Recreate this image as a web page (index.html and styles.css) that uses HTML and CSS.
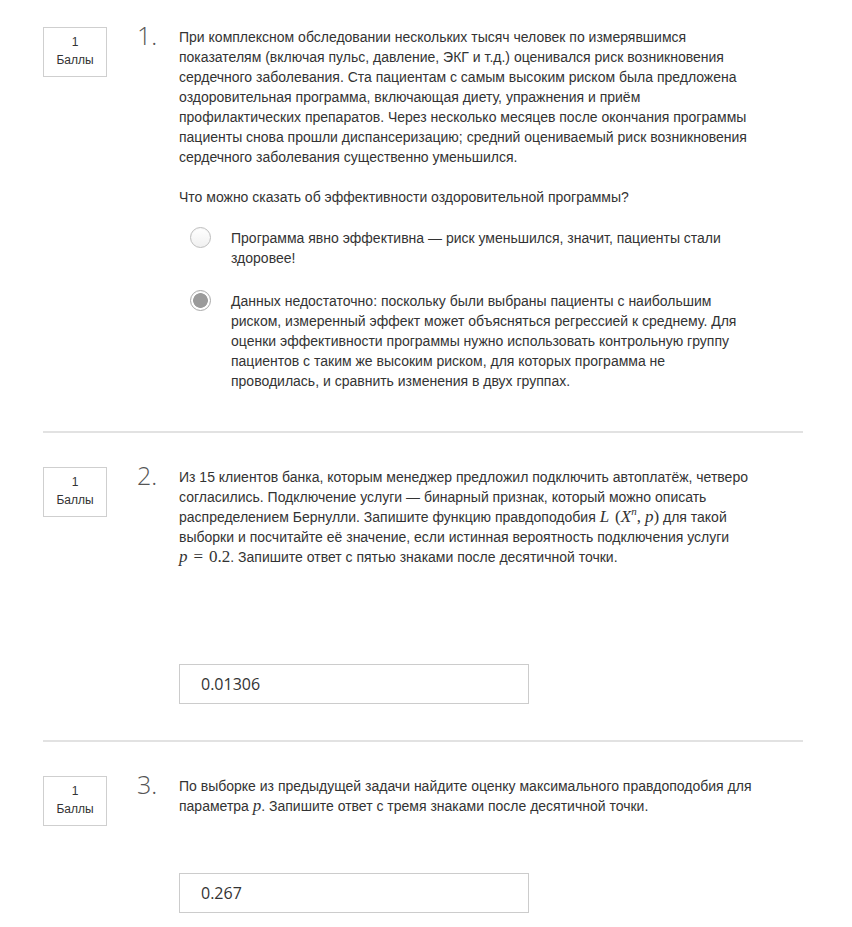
FILE: index.html
```html
<!DOCTYPE html>
<html lang="ru">
<head>
<meta charset="utf-8">
<title>Тест</title>
<link rel="stylesheet" href="styles.css">
</head>
<body>
<main class="quiz">
  <section class="question">
    <div class="points"><span>1</span><span>Баллы</span></div>
    <div class="num">1.</div>
    <div class="body">
      <p class="text">При комплексном обследовании нескольких тысяч человек по измерявшимся показателям (включая пульс, давление, ЭКГ и т.д.) оценивался риск возникновения сердечного заболевания. Ста пациентам с самым высоким риском была предложена оздоровительная программа, включающая диету, упражнения и приём профилактических препаратов. Через несколько месяцев после окончания программы пациенты снова прошли диспансеризацию; средний оцениваемый риск возникновения сердечного заболевания существенно уменьшился.</p>
      <p class="text ask">Что можно сказать об эффективности оздоровительной программы?</p>
      <div class="options">
        <label class="option">
          <span class="radio"></span>
          <span class="option-text">Программа явно эффективна — риск уменьшился, значит, пациенты стали здоровее!</span>
        </label>
        <label class="option">
          <span class="radio checked"></span>
          <span class="option-text">Данных недостаточно: поскольку были выбраны пациенты с наибольшим риском, измеренный эффект может объясняться регрессией к среднему. Для оценки эффективности программы нужно использовать контрольную группу пациентов с таким же высоким риском, для которых программа не проводилась, и сравнить изменения в двух группах.</span>
        </label>
      </div>
    </div>
  </section>
  <hr class="sep">
  <section class="question">
    <div class="points"><span>1</span><span>Баллы</span></div>
    <div class="num">2.</div>
    <div class="body">
      <p class="text">Из 15 клиентов банка, которым менеджер предложил подключить автоплатёж, четверо согласились. Подключение услуги — бинарный признак, который можно описать распределением Бернулли. Запишите функцию правдоподобия <span class="math"><i>L</i><span class="sp"></span>(<i>X</i><sup><i>n</i></sup>,<span class="sp2"></span><i>p</i>)</span> для такой выборки и посчитайте её значение, если истинная вероятность подключения услуги <span class="math"><i>p</i><span class="op">=</span>0.2</span>. Запишите ответ с пятью знаками после десятичной точки.</p>
      <div class="answer answer-far">0.01306</div>
    </div>
  </section>
  <hr class="sep">
  <section class="question">
    <div class="points"><span>1</span><span>Баллы</span></div>
    <div class="num">3.</div>
    <div class="body">
      <p class="text">По выборке из предыдущей задачи найдите оценку максимального правдоподобия для параметра <span class="math"><i>p</i></span>. Запишите ответ с тремя знаками после десятичной точки.</p>
      <div class="answer answer-near">0.267</div>
    </div>
  </section>
</main>
</body>
</html>
```

FILE: styles.css
```css
html, body {
  margin: 0;
  padding: 0;
  background: #fff;
}

body {
  font-family: "Liberation Sans", Arial, sans-serif;
  color: #333;
}

.quiz {
  width: 760px;
  margin-left: 43px;
  padding-top: 27px;
}

.question {
  display: flex;
  align-items: flex-start;
}

.points {
  box-sizing: border-box;
  width: 64px;
  height: 50px;
  border: 1px solid #cfcfcf;
  padding-top: 5px;
  display: flex;
  flex-direction: column;
  align-items: center;
  font-size: 12px;
  line-height: 18px;
  color: #333;
}

.num {
  width: 42px;
  margin-left: 30px;
  margin-top: -2px;
  font-family: "Open Sans", sans-serif;
  font-weight: 300;
  font-size: 25px;
  line-height: 20px;
  color: #555;
}

.body {
  width: 578px;
}

.text {
  margin: 0;
  font-size: 14px;
  line-height: 20px;
}

.ask {
  margin-top: 20px;
}

.options {
  display: flex;
  flex-direction: column;
  gap: 23px;
  padding-top: 21px;
  padding-bottom: 4px;
}

.option {
  display: flex;
  align-items: flex-start;
  margin-left: 11px;
}

.radio {
  box-sizing: border-box;
  flex: none;
  width: 21px;
  height: 21px;
  border-radius: 50%;
  border: 1px solid #bdbdbd;
  background: linear-gradient(#ffffff, #f0f0f0);
  box-shadow: inset 0 1px 1px rgba(0, 0, 0, 0.04);
  margin-top: -1px;
}

.radio.checked {
  border: 1px solid #a9a9a9;
  background: radial-gradient(circle, #9b9b9b 0, #9b9b9b 7px, #ffffff 7.7px);
}

.option-text {
  width: 512px;
  margin-left: 20px;
  font-size: 14px;
  line-height: 20px;
}

.math {
  font-family: "Liberation Serif", "DejaVu Serif", serif;
  font-size: 17px;
  line-height: 14px;
  white-space: nowrap;
}

.math i {
  font-style: italic;
}

.math sup {
  font-size: 11px;
  line-height: 0;
  vertical-align: 7px;
}

.sp {
  display: inline-block;
  width: 6px;
}

.sp2 {
  display: inline-block;
  width: 4px;
}

.op {
  padding: 0 6px;
}

.answer {
  box-sizing: border-box;
  width: 350px;
  height: 40px;
  border: 1px solid #cccccc;
  padding-left: 21px;
  font-family: "Open Sans", sans-serif;
  font-size: 16px;
  line-height: 38px;
  color: #333;
}

.answer-far {
  margin-top: 97px;
}

.answer-near {
  margin-top: 57px;
}

.sep {
  margin: 0;
  border: 0;
  height: 2px;
  background: #e2e2e2;
}

.question + .sep {
  margin-top: 36px;
}

.sep + .question {
  margin-top: 34px;
}
```
